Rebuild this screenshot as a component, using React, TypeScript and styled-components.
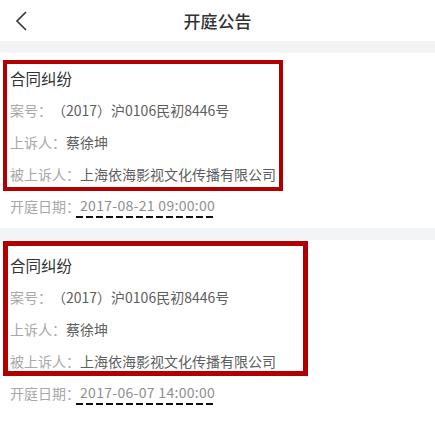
import React from "react";
import styled, { createGlobalStyle } from "styled-components";

const Global = createGlobalStyle`
  html, body { margin: 0; padding: 0; background: #fff; }
  body { font-family: "Noto Sans CJK SC", "Noto Sans", sans-serif; }
`;

const Page = styled.div`
  width: 435px;
  min-height: 426px;
  background: #fff;
`;

const Header = styled.div`
  height: 41px;
  display: flex;
  align-items: center;
  justify-content: center;
  position: relative;
`;

const BackButton = styled.div`
  position: absolute;
  left: 14px;
  top: 9px;
  width: 16px;
  height: 24px;
  display: flex;
  align-items: center;
`;

const Title = styled.div`
  font-size: 17px;
  font-weight: 500;
  color: #333;
  line-height: 41px;
`;

const Band = styled.div`
  height: 12px;
  background: #f3f4f6;
`;

const Card = styled.div`
  position: relative;
  padding: 9px 10px 6px;
`;

const Row = styled.div<{ $title?: boolean }>`
  height: 32px;
  display: flex;
  align-items: center;
  font-size: ${(p) => (p.$title ? "15.5px" : "14px")};
  color: ${(p) => (p.$title ? "#333" : "#5e5e5e")};
  white-space: nowrap;
`;

const Label = styled.span`
  color: #a8a8a8;
`;

const DateValue = styled.span`
  color: #8f8f8f;
  padding: 0 1px 3px 4px;
  margin-left: -4px;
  letter-spacing: 0.3px;
  background-image: repeating-linear-gradient(to right, #111 0 7px, transparent 7px 10px);
  background-size: 100% 2px;
  background-position: left bottom;
  background-repeat: no-repeat;
`;

const Highlight = styled.div<{ $top: number; $w: number; $h: number; $b: number }>`
  position: absolute;
  left: 3px;
  top: ${(p) => p.$top}px;
  width: ${(p) => p.$w}px;
  height: ${(p) => p.$h}px;
  border: ${(p) => p.$b}px solid #b20000;
  box-sizing: border-box;
  pointer-events: none;
`;

type Notice = {
  cause: string;
  caseNo: string;
  appellant: string;
  appellee: string;
  date: string;
  box: { top: number; w: number; h: number; b: number };
};

const notices: Notice[] = [
  {
    cause: "合同纠纷",
    caseNo: "（2017）沪0106民初8446号",
    appellant: "蔡徐坤",
    appellee: "上海依海影视文化传播有限公司",
    date: "2017-08-21 09:00:00",
    box: { top: 7, w: 280, h: 131, b: 4 },
  },
  {
    cause: "合同纠纷",
    caseNo: "（2017）沪0106民初8446号",
    appellant: "蔡徐坤",
    appellee: "上海依海影视文化传播有限公司",
    date: "2017-06-07 14:00:00",
    box: { top: 1, w: 305, h: 135, b: 5 },
  },
];

export default function App() {
  return (
    <Page>
      <Global />
      <Header>
        <BackButton>
          <svg width="14" height="22" viewBox="0 0 14 22">
            <polyline points="12,2 3,11 12,20" fill="none" stroke="#333" strokeWidth="1.6" />
          </svg>
        </BackButton>
        <Title>开庭公告</Title>
      </Header>
      {notices.map((n, i) => (
        <React.Fragment key={i}>
          <Band />
          <Card>
            <Row $title>{n.cause}</Row>
            <Row>
              <Label>案号：</Label>
              {n.caseNo}
            </Row>
            <Row>
              <Label>上诉人：</Label>
              {n.appellant}
            </Row>
            <Row>
              <Label>被上诉人：</Label>
              {n.appellee}
            </Row>
            <Row>
              <Label>开庭日期：</Label>
              <DateValue>{n.date}</DateValue>
            </Row>
            <Highlight $top={n.box.top} $w={n.box.w} $h={n.box.h} $b={n.box.b} />
          </Card>
        </React.Fragment>
      ))}
    </Page>
  );
}
